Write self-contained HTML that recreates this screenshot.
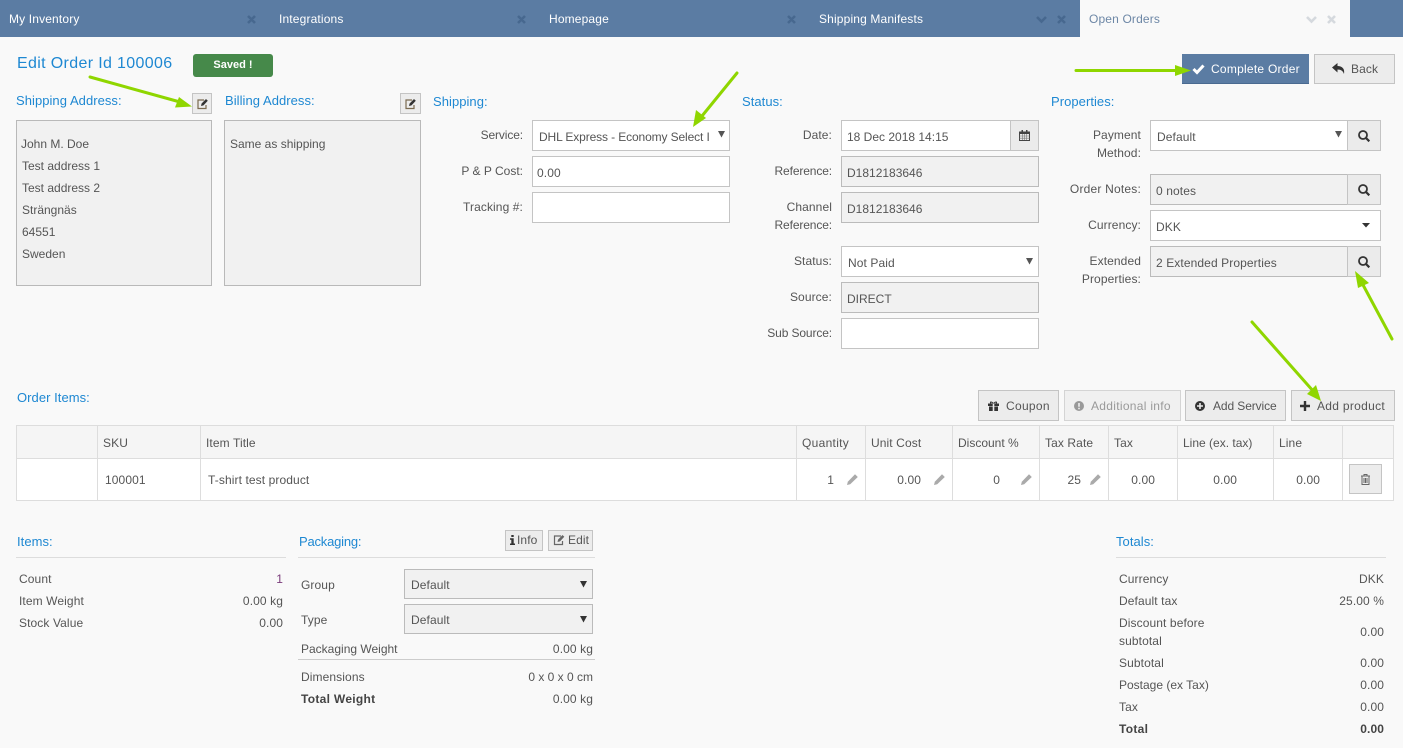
<!DOCTYPE html>
<html><head><meta charset="utf-8"><title>Edit Order</title>
<style>
html,body{margin:0;padding:0}
body{width:1403px;height:748px;position:relative;overflow:hidden;background:#f9f9f9;font-family:"Liberation Sans",sans-serif;font-size:12px;color:#555;letter-spacing:.1px}
.t{position:absolute;white-space:nowrap;line-height:16px}
.r{text-align:right}
.z{letter-spacing:0}
.n{letter-spacing:-.12px}
.p{letter-spacing:.3px}
.h{color:#1e88d2;font-size:13px;letter-spacing:.05px}
.w{color:#fff}
.tab{letter-spacing:.15px}
.b{position:absolute;box-sizing:border-box}
.f{position:absolute;box-sizing:border-box;height:31px;background:#fff;border:1px solid #c4c4c4}
.g{background:#f1f1f1;border-color:#bbb}
.a{position:absolute;box-sizing:border-box;height:31px;background:#ebebeb;border:1px solid #c4c4c4}
.btn{position:absolute;box-sizing:border-box;height:31px;background:#ececec;border:1px solid #c4c4c4}
.l{position:absolute;background:#ddd}
svg{position:absolute;overflow:visible}
</style></head><body>

<!-- tab bar -->
<div class="b" style="left:0;top:0;width:1403px;height:37px;background:#5b7ca3"></div>
<div class="b" style="left:1080px;top:0;width:270px;height:37px;background:#f9f9f9"></div>
<div class="t w tab" style="left:9px;top:11px">My Inventory</div>
<div class="t w tab" style="left:279px;top:11px">Integrations</div>
<div class="t w tab" style="left:549px;top:11px">Homepage</div>
<div class="t w tab" style="left:819px;top:11px">Shipping Manifests</div>
<div class="t tab" style="left:1089px;top:11px;color:#6d87a6">Open Orders</div>
<svg style="left:0;top:0" width="1403" height="37">
<g stroke="#47688f" stroke-width="2.6" fill="none">
<path d="M248 16l7 7M255 16l-7 7M518 16l7 7M525 16l-7 7M788 16l7 7M795 16l-7 7M1058 16l7 7M1065 16l-7 7"/>
<path d="M1037 17l4.500 4.500l4.500-4.500"/>
</g>
<g stroke="#d5d9de" stroke-width="2.600" fill="none">
<path d="M1328 16l7 7M1335 16l-7 7M1307 17l4.500 4.500l4.500-4.500"/>
</g>
</svg>

<!-- title -->
<div class="t" style="left:17px;top:55px;font-size:16px;color:#1e88d2;line-height:18px;letter-spacing:.35px">Edit Order Id 100006</div>
<div class="b" style="left:193px;top:54px;width:80px;height:23px;background:#46894a;border-radius:3px"></div>
<div class="t w" style="left:193px;top:57px;width:80px;text-align:center;font-weight:bold;font-size:11px;letter-spacing:0">Saved !</div>

<!-- top right buttons -->
<div class="b" style="left:1182px;top:54px;width:127px;height:30px;background:#5b7ca3;border-bottom:1px solid #4a6a90"></div>
<div class="t w" style="left:1211px;top:61px;letter-spacing:.25px">Complete Order</div>
<svg style="left:1192px;top:63px" width="13" height="12"><path d="M1.500 6l3.500 3.500l6.500-7" stroke="#fff" stroke-width="3" fill="none"/></svg>
<div class="btn" style="left:1314px;top:54px;width:81px;height:30px"></div>
<div class="t" style="left:1351px;top:61px;letter-spacing:.1px">Back</div>
<svg style="left:1332px;top:63px" width="13" height="12"><path d="M0 4.500L5.500 0v3C10 3 13 5.500 12 11C11 8 9 6.500 5.500 6.500V9.500z" fill="#333"/></svg>

<!-- addresses -->
<div class="t h" style="left:16px;top:93px">Shipping Address:</div>
<div class="t h" style="left:225px;top:93px">Billing Address:</div>
<div class="btn" style="left:192px;top:93px;width:20px;height:21px"></div>
<div class="btn" style="left:400px;top:93px;width:21px;height:21px"></div>
<svg style="left:196px;top:98px" width="13" height="12"><path d="M8 2H2v8.500h8V7" fill="none" stroke="#7a6a50" stroke-width="1.200"/><path d="M5 8l.6-2.500L10 1l1.800 1.800L7.500 7.400z" fill="#333"/></svg>
<svg style="left:404px;top:98px" width="13" height="12"><path d="M8 2H2v8.500h8V7" fill="none" stroke="#7a6a50" stroke-width="1.200"/><path d="M5 8l.6-2.500L10 1l1.800 1.800L7.500 7.400z" fill="#333"/></svg>
<div class="b" style="left:16px;top:120px;width:196px;height:166px;background:#f1f1f1;border:1px solid #b9b9b9"></div>
<div class="b" style="left:224px;top:120px;width:197px;height:166px;background:#f1f1f1;border:1px solid #b9b9b9"></div>
<div class="t z" style="left:21px;top:136px">John M. Doe</div>
<div class="t z" style="left:22px;top:158px">Test address 1</div>
<div class="t z" style="left:22px;top:180px">Test address 2</div>
<div class="t z" style="left:22px;top:202px">Strängnäs</div>
<div class="t z" style="left:22px;top:224px">64551</div>
<div class="t z" style="left:22px;top:246px">Sweden</div>
<div class="t z" style="left:230px;top:136px">Same as shipping</div>

<!-- shipping -->
<div class="t h" style="left:433px;top:94px">Shipping:</div>
<div class="t r n" style="right:880px;top:127px">Service:</div>
<div class="t r z" style="right:880px;top:163px">P &amp; P Cost:</div>
<div class="t r" style="right:880px;top:199px">Tracking #:</div>
<div class="f" style="left:532px;top:120px;width:198px"></div>
<div class="f" style="left:532px;top:156px;width:198px"></div>
<div class="f" style="left:532px;top:192px;width:198px"></div>
<div class="t n" style="left:539px;top:129px;width:171px;overflow:hidden">DHL Express - Economy Select I</div>
<div class="t" style="left:537px;top:165px">0.00</div>
<svg style="left:718px;top:131px" width="8" height="7"><path d="M0 0h7L3.500 6.500z" fill="#555"/></svg>

<!-- status -->
<div class="t h" style="left:742px;top:94px">Status:</div>
<div class="t r" style="right:571px;top:127px">Date:</div>
<div class="t r n" style="right:571px;top:163px">Reference:</div>
<div class="t r" style="right:571px;top:199px">Channel</div>
<div class="t r n" style="right:571px;top:217px">Reference:</div>
<div class="t r" style="right:571px;top:253px">Status:</div>
<div class="t r" style="right:571px;top:289px">Source:</div>
<div class="t r n" style="right:571px;top:325px">Sub Source:</div>
<div class="f" style="left:841px;top:120px;width:170px"></div>
<div class="a" style="left:1010px;top:120px;width:29px"></div>
<svg style="left:1019px;top:130px" width="11" height="11"><path d="M.5 2h10v8.500H.5z" fill="none" stroke="#444"/><path d="M0 1.500h11v2.500H0zM2.500 0h1.500v2H2.500zM7 0h1.500v2H7z" fill="#444"/><path d="M.5 6h10M.5 8.200h10M3.500 4v6M5.500 4v6M7.500 4v6" stroke="#777" stroke-width=".6"/></svg>
<div class="f g" style="left:841px;top:156px;width:198px"></div>
<div class="f g" style="left:841px;top:192px;width:198px"></div>
<div class="f" style="left:841px;top:246px;width:198px"></div>
<div class="f g" style="left:841px;top:282px;width:198px"></div>
<div class="f" style="left:841px;top:318px;width:198px"></div>
<div class="t z" style="left:847px;top:129px">18 Dec 2018 14:15</div>
<div class="t z" style="left:847px;top:165px">D1812183646</div>
<div class="t z" style="left:847px;top:201px">D1812183646</div>
<div class="t" style="left:848px;top:255px">Not Paid</div>
<div class="t z" style="left:847px;top:291px">DIRECT</div>
<svg style="left:1026px;top:258px" width="8" height="7"><path d="M0 0h7L3.500 6.500z" fill="#555"/></svg>

<!-- properties -->
<div class="t h" style="left:1051px;top:94px">Properties:</div>
<div class="t r" style="right:262px;top:127px">Payment</div>
<div class="t r" style="right:262px;top:145px">Method:</div>
<div class="t r" style="right:262px;top:181px;letter-spacing:.2px">Order Notes:</div>
<div class="t r" style="right:262px;top:217px">Currency:</div>
<div class="t r" style="right:262px;top:253px">Extended</div>
<div class="t r" style="right:262px;top:271px">Properties:</div>
<div class="f" style="left:1150px;top:120px;width:198px"></div>
<div class="f g" style="left:1150px;top:174px;width:198px"></div>
<div class="f" style="left:1150px;top:210px;width:231px"></div>
<div class="f g" style="left:1150px;top:246px;width:198px"></div>
<div class="a" style="left:1347px;top:120px;width:34px"></div>
<div class="a" style="left:1347px;top:174px;width:34px"></div>
<div class="a" style="left:1347px;top:246px;width:34px"></div>
<div class="t" style="left:1157px;top:129px">Default</div>
<div class="t" style="left:1156px;top:183px">0 notes</div>
<div class="t" style="left:1156px;top:219px">DKK</div>
<div class="t" style="left:1156px;top:255px">2 Extended Properties</div>
<svg style="left:1335px;top:131px" width="8" height="7"><path d="M0 0h7L3.500 6.500z" fill="#555"/></svg>
<svg style="left:1362px;top:223px" width="9" height="5"><path d="M0 0h8L4 4.500z" fill="#333"/></svg>
<svg style="left:1358px;top:130px" width="12" height="12"><circle cx="5" cy="5" r="4" fill="none" stroke="#333" stroke-width="1.800"/><path d="M8 8l3.300 3.300" stroke="#333" stroke-width="2.200"/></svg>
<svg style="left:1358px;top:184px" width="12" height="12"><circle cx="5" cy="5" r="4" fill="none" stroke="#333" stroke-width="1.800"/><path d="M8 8l3.300 3.300" stroke="#333" stroke-width="2.200"/></svg>
<svg style="left:1358px;top:256px" width="12" height="12"><circle cx="5" cy="5" r="4" fill="none" stroke="#333" stroke-width="1.800"/><path d="M8 8l3.300 3.300" stroke="#333" stroke-width="2.200"/></svg>

<!-- order items -->
<div class="t h" style="left:17px;top:390px">Order Items:</div>
<div class="btn" style="left:978px;top:390px;width:81px"></div>
<div class="btn" style="left:1064px;top:390px;width:117px;background:#f0f0f0;border-color:#d4d4d4"></div>
<div class="btn" style="left:1185px;top:390px;width:101px"></div>
<div class="btn" style="left:1291px;top:390px;width:104px"></div>
<div class="t p" style="left:1006px;top:398px">Coupon</div>
<div class="t p" style="left:1091px;top:398px;color:#999">Additional info</div>
<div class="t" style="left:1213px;top:398px;letter-spacing:-.1px">Add Service</div>
<div class="t p" style="left:1317px;top:398px">Add product</div>
<svg style="left:988px;top:401px" width="11" height="10"><path d="M0 2.500h11v2.500H0zM1 5.500h9V10H1z" fill="#333"/><path d="M5.500 2.500C3 0 1.500 1 3 2.500M5.500 2.500C8 0 9.500 1 8 2.500" stroke="#333" fill="none"/><path d="M4.700 2.500h1.600V10H4.700z" fill="#ececec"/></svg>
<svg style="left:1074px;top:401px" width="10" height="10"><circle cx="5" cy="5" r="5" fill="#999"/><path d="M4.200 2h1.600v3.800H4.200zM4.200 6.700h1.600v1.500H4.200z" fill="#f0f0f0"/></svg>
<svg style="left:1195px;top:401px" width="10" height="10"><circle cx="5" cy="5" r="5" fill="#333"/><path d="M4.200 2h1.600v6H4.200zM2 4.200h6v1.600H2z" fill="#ececec"/></svg>
<svg style="left:1300px;top:401px" width="10" height="10"><path d="M3.800 0h2.400v10H3.800zM0 3.800h10v2.400H0z" fill="#333"/></svg>

<!-- table -->
<div class="b" style="left:16px;top:425px;width:1378px;height:76px;background:#fff;border:1px solid #ddd"></div>
<div class="b" style="left:17px;top:426px;width:1376px;height:33px;background:#f5f5f5;border-bottom:1px solid #ddd"></div>
<div class="l" style="left:97px;top:425px;width:1px;height:76px"></div>
<div class="l" style="left:200px;top:425px;width:1px;height:76px"></div>
<div class="l" style="left:796px;top:425px;width:1px;height:76px"></div>
<div class="l" style="left:865px;top:425px;width:1px;height:76px"></div>
<div class="l" style="left:952px;top:425px;width:1px;height:76px"></div>
<div class="l" style="left:1039px;top:425px;width:1px;height:76px"></div>
<div class="l" style="left:1108px;top:425px;width:1px;height:76px"></div>
<div class="l" style="left:1177px;top:425px;width:1px;height:76px"></div>
<div class="l" style="left:1273px;top:425px;width:1px;height:76px"></div>
<div class="l" style="left:1342px;top:425px;width:1px;height:76px"></div>
<div class="t" style="left:103px;top:435px">SKU</div>
<div class="t" style="left:206px;top:435px">Item Title</div>
<div class="t p" style="left:802px;top:435px">Quantity</div>
<div class="t" style="left:871px;top:435px">Unit Cost</div>
<div class="t z" style="left:958px;top:435px">Discount %</div>
<div class="t" style="left:1045px;top:435px">Tax Rate</div>
<div class="t" style="left:1114px;top:435px">Tax</div>
<div class="t z" style="left:1183px;top:435px">Line (ex. tax)</div>
<div class="t" style="left:1279px;top:435px">Line</div>
<div class="t" style="left:105px;top:472px">100001</div>
<div class="t" style="left:208px;top:472px">T-shirt test product</div>
<div class="t r" style="right:569px;top:472px">1</div>
<div class="t r" style="right:482px;top:472px">0.00</div>
<div class="t r" style="right:403px;top:472px">0</div>
<div class="t r" style="right:322px;top:472px">25</div>
<div class="t r" style="right:248px;top:472px">0.00</div>
<div class="t r" style="right:166px;top:472px">0.00</div>
<div class="t r" style="right:83px;top:472px">0.00</div>
<svg style="left:847px;top:474px" width="11" height="11"><path d="M0 11l.8-3.200L8 .3 10.800 3 3.200 10.300z" fill="#aaa"/></svg>
<svg style="left:934px;top:474px" width="11" height="11"><path d="M0 11l.8-3.200L8 .3 10.800 3 3.200 10.300z" fill="#aaa"/></svg>
<svg style="left:1021px;top:474px" width="11" height="11"><path d="M0 11l.8-3.200L8 .3 10.800 3 3.200 10.300z" fill="#aaa"/></svg>
<svg style="left:1090px;top:474px" width="11" height="11"><path d="M0 11l.8-3.200L8 .3 10.800 3 3.200 10.300z" fill="#aaa"/></svg>
<div class="btn" style="left:1349px;top:464px;width:33px;height:30px"></div>
<svg style="left:1361px;top:474px" width="9" height="11"><path d="M0 2h9M3 2V.5h3V2M1 2.500v8h7v-8M3 4v5M4.500 4v5M6 4v5" fill="none" stroke="#666"/></svg>

<!-- items panel -->
<div class="t h" style="left:17px;top:534px">Items:</div>
<div class="l" style="left:16px;top:557px;width:270px;height:1px"></div>
<div class="t" style="left:19px;top:571px">Count</div>
<div class="t" style="left:19px;top:593px">Item Weight</div>
<div class="t" style="left:19px;top:615px">Stock Value</div>
<div class="t r" style="right:1120px;top:571px;color:#7a3b7a">1</div>
<div class="t r" style="right:1120px;top:593px">0.00 kg</div>
<div class="t r" style="right:1120px;top:615px">0.00</div>

<!-- packaging -->
<div class="t h" style="left:299px;top:534px;letter-spacing:-.2px">Packaging:</div>
<div class="btn" style="left:505px;top:530px;width:38px;height:21px"></div>
<div class="btn" style="left:548px;top:530px;width:45px;height:21px"></div>
<div class="t" style="left:517px;top:532px">Info</div>
<div class="t" style="left:568px;top:532px">Edit</div>
<svg style="left:510px;top:535px" width="5" height="10"><path d="M1.300 0h2.400v2H1.300zM0 3.200h3.700V8.500H5V10H0V8.500h1.300V4.700H0z" fill="#333"/></svg>
<svg style="left:553px;top:534px" width="13" height="12"><path d="M8 2H1.500v8.500h8V7" fill="none" stroke="#666" stroke-width="1.200"/><path d="M4.500 8l.6-2.500L9.500 1l1.800 1.800L7 7.400z" fill="#666"/></svg>
<div class="l" style="left:298px;top:557px;width:297px;height:1px"></div>
<div class="t" style="left:301px;top:577px">Group</div>
<div class="t" style="left:301px;top:612px">Type</div>
<div class="f g" style="left:404px;top:569px;width:189px;height:30px"></div>
<div class="f g" style="left:404px;top:604px;width:189px;height:30px"></div>
<div class="t" style="left:411px;top:577px">Default</div>
<div class="t" style="left:411px;top:612px">Default</div>
<svg style="left:580px;top:581px" width="8" height="7"><path d="M0 0h7L3.500 6.500z" fill="#333"/></svg>
<svg style="left:580px;top:616px" width="8" height="7"><path d="M0 0h7L3.500 6.500z" fill="#333"/></svg>
<div class="t z" style="left:301px;top:641px">Packaging Weight</div>
<div class="t r" style="right:810px;top:641px">0.00 kg</div>
<div class="l" style="left:298px;top:659px;width:297px;height:1px;background:#ccc"></div>
<div class="t" style="left:301px;top:669px">Dimensions</div>
<div class="t r z" style="right:810px;top:669px">0 x 0 x 0 cm</div>
<div class="t p" style="left:301px;top:691px;font-weight:bold;color:#444">Total Weight</div>
<div class="t r" style="right:810px;top:691px">0.00 kg</div>

<!-- totals -->
<div class="t h" style="left:1116px;top:534px">Totals:</div>
<div class="l" style="left:1116px;top:557px;width:270px;height:1px"></div>
<div class="t" style="left:1119px;top:571px">Currency</div>
<div class="t" style="left:1119px;top:593px">Default tax</div>
<div class="t" style="left:1119px;top:615px">Discount before</div>
<div class="t" style="left:1119px;top:633px">subtotal</div>
<div class="t" style="left:1119px;top:655px">Subtotal</div>
<div class="t z" style="left:1119px;top:677px">Postage (ex Tax)</div>
<div class="t" style="left:1119px;top:699px">Tax</div>
<div class="t p" style="left:1119px;top:721px;font-weight:bold;color:#444">Total</div>
<div class="t r" style="right:19px;top:571px">DKK</div>
<div class="t r" style="right:19px;top:593px">25.00 %</div>
<div class="t r" style="right:19px;top:624px">0.00</div>
<div class="t r" style="right:19px;top:655px">0.00</div>
<div class="t r" style="right:19px;top:677px">0.00</div>
<div class="t r" style="right:19px;top:699px">0.00</div>
<div class="t r" style="right:19px;top:721px;font-weight:bold;color:#444">0.00</div>

<!-- green arrows -->
<svg style="left:0;top:0" width="1403" height="748">
<g stroke="#8fd600" stroke-width="3" fill="none" stroke-linecap="round">
<path d="M90 77L180 102"/>
<path d="M737 73L702 116"/>
<path d="M1076 70.500H1178"/>
<path d="M1392 339L1362 283"/>
<path d="M1252 322L1314 392"/>
</g>
<g fill="#8fd600">
<path d="M192 106.500L175 107.500L179 97z"/>
<path d="M693 127L696 110L706 118z"/>
<path d="M1191 70.500L1175 76V65z"/>
<path d="M1355 271L1369 283L1358 288z"/>
<path d="M1321 401L1307 394L1316 385z"/>
</g>
</svg>
</body></html>
